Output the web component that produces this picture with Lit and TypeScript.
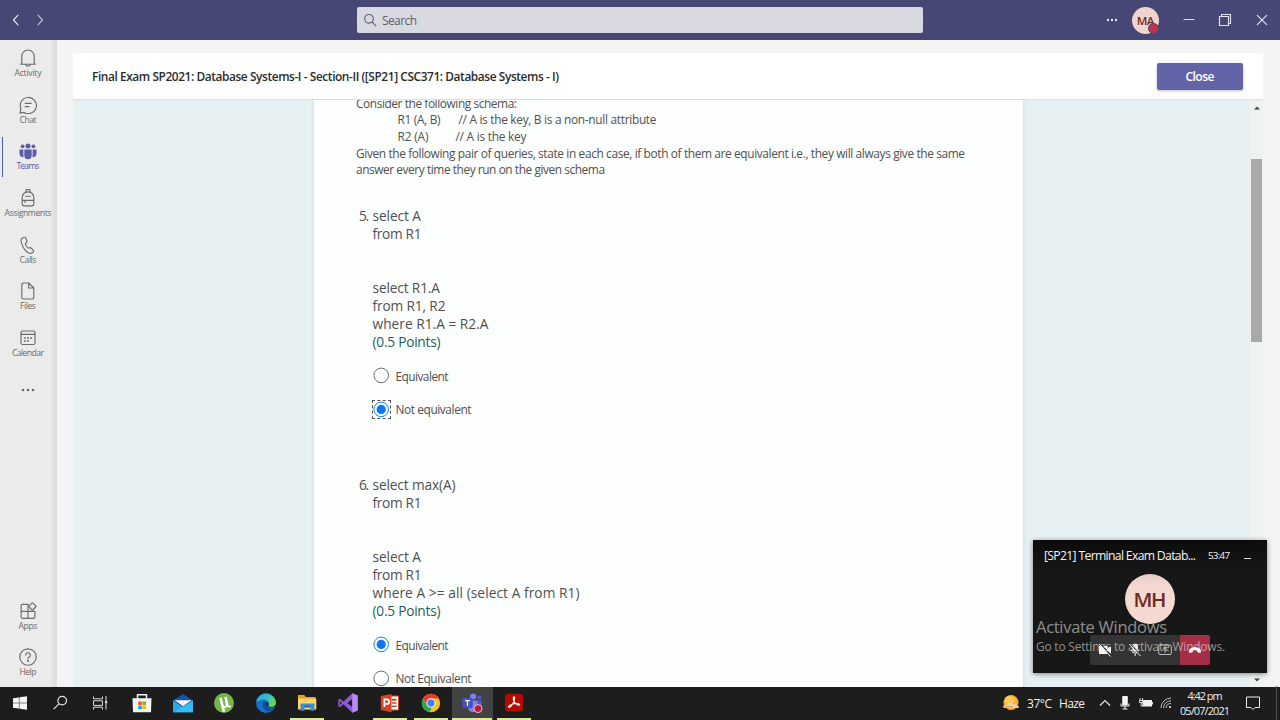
import { LitElement, html, svg, css, nothing } from "lit";
import { customElement, property } from "lit/decorators.js";

/** One line of text, tracked so that it spans the given width. */
@customElement("fit-text")
class FitText extends LitElement {
  @property({ type: Number }) w = 0;
  @property() text = "";
  static styles = css`
    :host { display: block; white-space: pre; }
    span { display: inline-block; white-space: pre; }
  `;
  render() {
    return html`<span>${this.text}</span>`;
  }
  updated() {
    const el = this.renderRoot.querySelector("span") as HTMLElement;
    el.style.letterSpacing = "0px";
    const natural = el.getBoundingClientRect().width;
    const n = this.text.length;
    if (this.w && n > 1) {
      const ls = (this.w - natural) / (n - 1);
      el.style.letterSpacing = `${ls.toFixed(3)}px`;
      el.style.marginRight = `${(-ls).toFixed(3)}px`;
    }
  }
}

const fit = (text: string, w: number, cls = "") =>
  html`<fit-text class=${cls} .w=${w} .text=${text}></fit-text>`;

const icon = (w: number, h: number, body: unknown) =>
  html`<svg width=${w} height=${h} viewBox="0 0 ${w} ${h}" fill="none" stroke="currentColor" stroke-width="1.15" stroke-linecap="round" stroke-linejoin="round">${body}</svg>`;

const railTop = [
  { label: "Activity", w: 27, icon: svg`<path d="M2.8 14V7.200a6.200 6.200 0 0 1 12.400 0V14l1 1.200H1.800zM6.700 15.500a2.400 2.400 0 0 0 4.600 0"/>` },
  { label: "Chat", w: 17, icon: svg`<path d="M1 17.200l.9-4.400A8.100 8.100 0 1 1 5 16.400zM6.200 7.400h6M6.200 10.600h3.900"/>` },
  { label: "Teams", w: 23, on: true, icon: svg`<g fill="currentColor" stroke="none"><circle cx="9" cy="3.900" r="2.500"/><circle cx="3.600" cy="4.300" r="1.900"/><circle cx="14.400" cy="4.300" r="1.900"/><path d="M5.300 7.400h7.400v6.200a3.700 3.700 0 0 1-7.400 0zM.5 7.400h3.900v6.400l.3 1.300A3.500 3.500 0 0 1 .5 12zM17.500 7.400h-3.900v6.400l-.3 1.300a3.500 3.500 0 0 0 4.200-3.100z"/></g>` },
  { label: "Assignments", w: 47, icon: svg`<path d="M3.200 15V8.600a5.800 5.800 0 0 1 11.600 0V15a1.800 1.800 0 0 1-1.800 1.800H5A1.800 1.800 0 0 1 3.200 15zM6.900 3.400V2.200a2.100 2.100 0 0 1 4.200 0v1.200M3.200 11.400h11.600M6 11.400v2M6.700 7.200h4.600"/>` },
  { label: "Calls", w: 17, icon: svg`<path d="M3.200 2.300L4.600 1.500c.9-.5 1.800-.2 2.200.7l1 2.500c.3.800.1 1.400-.5 2l-1 .9c.5 1.800 1.500 3.400 2.900 4.500l1.400-.4c.7-.2 1.400 0 1.900.6l1.700 2.100c.5.7.4 1.500-.2 2-2.800 2.400-7.100-.3-9.400-4.400C2.400 8.100 1.200 3.700 3.200 2.300z"/>` },
  { label: "Files", w: 16, icon: svg`<path d="M4.600 1h5.200l5 5v9.200a1.800 1.800 0 0 1-1.800 1.800H4.600a1.800 1.800 0 0 1-1.800-1.800V2.800A1.800 1.800 0 0 1 4.600 1zM9.600 1.200V6h5"/>` },
  { label: "Calendar", w: 32, icon: svg`<rect x="2" y="2" width="14" height="13.500" rx="1.800"/><path d="M2 5.400h14"/><g fill="currentColor" stroke="none"><circle cx="6" cy="9" r=".95"/><circle cx="9" cy="9" r=".95"/><circle cx="12" cy="9" r=".95"/><circle cx="6" cy="12" r=".95"/><circle cx="9" cy="12" r=".95"/></g>` },
];

const railBottom = [
  { label: "Apps", w: 19, icon: svg`<path d="M9 2.300H3.600A1.500 1.500 0 0 0 2.100 3.800v11a1.500 1.500 0 0 0 1.500 1.500h10.800a1.500 1.500 0 0 0 1.500-1.500V9.300H2.100M9 2.300v14"/><rect x="10.600" y="1.700" width="5.500" height="5.500" rx=".8" transform="rotate(45 13.350 4.450)"/>` },
  { label: "Help", w: 17, icon: svg`<circle cx="9" cy="9" r="8.200"/><path d="M6.700 7a2.300 2.300 0 1 1 3.500 2c-.8.5-1.200.9-1.200 1.900"/><circle cx="9" cy="13" r=".5" fill="currentColor"/>` },
];

const questions = [
  {
    no: "5.",
    lines: [["select A", 48.5], ["from R1", 49], ["", 0], ["", 0], ["select R1.A", 67.5], ["from R1, R2", 73], ["where R1.A = R2.A", 116]],
    options: [{ text: "Equivalent", w: 53 }, { text: "Not equivalent", w: 76, on: true, focus: true }],
  },
  {
    no: "6.",
    lines: [["select max(A)", 83], ["from R1", 49], ["", 0], ["", 0], ["select A", 48.5], ["from R1", 49], ["where A >= all (select A from R1)", 207]],
    options: [{ text: "Equivalent", w: 53, on: true }, { text: "Not Equivalent", w: 76 }],
  },
] as { no: string; lines: [string, number][]; options: { text: string; w: number; on?: boolean; focus?: boolean }[] }[];

const art = (body: unknown) => html`<svg width="22" height="22" viewBox="0 0 22 22">${body}</svg>`;

const taskIcons: { art: unknown; run?: boolean; on?: boolean }[] = [
  { art: art(svg`<path fill="#f6f6f6" d="M4 6.200l5.900-.8v5.300H4zM10.400 5.300L18 4.200v6.500h-7.600zM4 11.200h5.900v5.400L4 15.800zM10.400 11.200H18v6.600l-7.600-1.100z"/>`) },
  { art: art(svg`<g fill="none" stroke="#e4e4e4" stroke-width="1.200"><circle cx="13.200" cy="8.600" r="4.300"/><path d="M10 11.800L4.600 17.200"/></g>`) },
  { art: art(svg`<g fill="none" stroke="#dcdcdc" stroke-width="1"><path d="M3.500 4.500v2.300h9V4.500M3.500 17.500v-2.300h9v2.300M3.500 8.800h9v4.600h-9zM16 4v5M16 12v5.500"/><path d="M15 9h2.200v2.600H15z" fill="#dcdcdc" stroke="none"/></g>`) },
  { art: art(svg`<path d="M6.500 7V2.700h9V7" fill="none" stroke="#f2f2f2" stroke-width="1.500"/><path d="M1.500 6.300h19l-.5 14H2z" fill="#f4f4f4"/><path fill="#f25022" d="M7.300 9.500h3.500v3.500H7.300z"/><path fill="#7fba00" d="M11.400 9.500h3.500v3.500h-3.500z"/><path fill="#00a4ef" d="M7.300 13.600h3.500v3.500H7.300z"/><path fill="#ffb900" d="M11.400 13.600h3.500v3.500h-3.500z"/>`) },
  { art: art(svg`<path d="M1 8.500L11 2l10 6.500v2H1z" fill="#0f58a8"/><path d="M1 8.500L11 14.800 21 8.500V20.300H1z" fill="#28a8ea"/><path d="M21 8.500L1 20.300h20z" fill="#38b9f4"/><path d="M2.500 8.200h17L11 14.200z" fill="#f4f9fd"/>`) },
  { art: art(svg`<circle cx="11" cy="11" r="10" fill="#76b54a"/><path d="M6.200 6.200l2.500-.8 1.900 7.400c.5 2 2.400 1.800 2.200-.3l-1.500-7.200 2.500-.5 1.700 7.600c.4 1.500 1.500 1.600 2.400 1.200l.2 1.500c-1.400.8-3 .7-3.900-.6-.8 1.400-2 1.700-3 1.300l1 3.700-2.500.5z" fill="#fff"/>`) },
  { art: art(svg`<defs><linearGradient id="e1" x1="0" y1="0" x2="1" y2=".4"><stop offset="0" stop-color="#2aa7e8"/><stop offset=".6" stop-color="#35c1c4"/><stop offset="1" stop-color="#62d84e"/></linearGradient></defs><circle cx="11" cy="11" r="10" fill="#1474c4"/><path d="M1.200 10A10 10 0 0 1 21 10.500c0 3.400-3 4.600-5.500 4.400-1.800-.2-2.700-1-2.100-2 1.500-2.600-1-5.800-5-5.400C5 7.800 2.300 9 1.200 10z" fill="url(#e1)"/><path d="M8.200 10c-1.700 3.700.6 8.600 5.600 9.600A10 10 0 0 0 19.500 16c-3 1.600-7.300.6-8.200-2.500-.4-1.600.3-2.600.7-3.300-1-.8-2.700-1-3.800-.2z" fill="#0c4f9c"/><path d="M12 10.200c-1.500 2 0 4.700 3.500 5.300 1.900.3 3.500-.3 4.500-1l1 1.500 1-4-3 2.500c-3.500 1.200-6.500.2-5.600-1.700.4-1 .2-2-1.400-2.600z" fill="#1e1e1e"/>`) },
  { run: true, art: art(svg`<path d="M2 3h6.300l1.500 2h9.700v5H2z" fill="#e9a020"/><path d="M2 6.500h18.300v11H2z" fill="#ffd667"/><path d="M4.500 11.500h14v7.300h-3.900v-3.300H8.400v3.300H4.500z" fill="#3f8fd0"/><path d="M8.400 13.400h6.200v2H8.400z" fill="#2c6fb0"/>`) },
  { art: art(svg`<path d="M15.300 1.300L20.700 3.600v14.800l-5.400 2.300-9-8.500L3 15.200 1.300 14.300V7.700L3 6.800l3.300 3zM15.400 7L10.200 11l5.200 4zM2.900 9v4L5 11z" fill="#8c5ad6" fill-rule="evenodd"/><path d="M15.300 1.300L20.700 3.600v14.800l-5.400 2.300z" fill="#b98cf2"/>`) },
  { run: true, art: art(svg`<path d="M11.500 4h8v14h-8z" fill="#fff" stroke="#d04423"/><path d="M13 6.800h4.500v2H13zM13 10.300h4.500v1.400H13zM13 13.500h4.500v1.400H13z" fill="#d04423"/><path d="M1.800 4l10.800-2v18.200L1.800 18z" fill="#d24625"/><path d="M5.400 15V7.300h2.300a2.300 2.300 0 0 1 0 4.700H5.500" fill="none" stroke="#fff" stroke-width="1.700"/>`) },
  { run: true, art: art(svg`<circle cx="11" cy="11" r="9.200" fill="#fbc116"/><path d="M3 6.400A9.200 9.200 0 0 1 19 6.400H11L7.200 13.200z" fill="#e33b2e"/><path d="M3 6.400l4 6.900A4.600 4.600 0 0 0 12 15.400L9.700 20.100A9.200 9.200 0 0 1 3 6.400z" fill="#2da44e"/><circle cx="11" cy="11" r="4.700" fill="#fff"/><circle cx="11" cy="11" r="3.700" fill="#3f83f0"/>`) },
  { run: true, on: true, art: art(svg`<circle cx="12.200" cy="4.600" r="3" fill="#7b83eb"/><circle cx="18.300" cy="5.600" r="2.100" fill="#5059c9"/><path d="M15 8.500h5.800v5.500a3.500 3.500 0 0 1-5.800 2.600z" fill="#5059c9"/><path d="M7.500 8.500h9v7a4.800 4.800 0 0 1-9 2z" fill="#7b83eb"/><rect x="1.300" y="6" width="10.400" height="10" rx="1" fill="#4650b6"/><path d="M4 8.600h5M6.500 8.600v5.200" stroke="#fff" stroke-width="1.300"/><circle cx="17" cy="16.600" r="4" fill="#c4153a" stroke="#eee" stroke-width=".8"/>`) },
  { run: true, art: art(svg`<rect x="2" y="1.800" width="18" height="17.600" rx="3" fill="#b30b00"/><path d="M5.800 15.200c-1.600-.8 2-3 5.200-3.500 3.400-.6 6.300.2 5.500 1.300-1 1.100-4.800-1.300-5.800-4.300-.6-2-.6-3.700.2-3.800 1-.1.900 2.400 0 4.500-1.100 2.900-3.500 6.500-5.100 5.800z" fill="none" stroke="#fff" stroke-width="1.100"/>`) },
];

@customElement("app-root")
class AppRoot extends LitElement {
  static styles = css`
    :host { display: block; width: 1280px; height: 720px; overflow: hidden; font-family: "Open Sans", "Noto Sans", sans-serif; color: #505050; }
    * { box-sizing: border-box; }
    svg { display: block; flex: none; }
    .page { display: flex; flex-direction: column; width: 1280px; height: 720px; position: relative; }
    .titlebar { height: 40px; flex: none; background: #464775; display: flex; align-items: center; color: #e4e4f0; padding-left: 11px; }
    .nav { display: flex; gap: 14px; width: 346px; }
    .search { width: 566px; height: 26px; background: #d9d9e2; border-radius: 2px; display: flex; align-items: center; gap: 5px; padding-left: 6px; color: #5c5d76; font-size: 12px; }
    .wincontrols { display: flex; align-items: center; padding-left: 183px; }
    .avatar { width: 27px; height: 27px; border-radius: 50%; background: #f1d4cc; color: #6e2a1d; font-size: 11.500px; font-weight: 600; display: flex; align-items: center; justify-content: center; position: relative; margin: 0 24px 0 14px; }
    .busy { position: absolute; right: 0; bottom: 0; width: 11px; height: 11px; border-radius: 50%; background: #c4314b; border: 1px solid #464775; }
    .restore { margin-left: 23px; }
    .exit { margin-left: 24px; }
    .body { flex: 1; min-height: 0; display: flex; background: #f4f4f4; }
    .rail { width: 57px; flex: none; background: linear-gradient(90deg, #ebebeb 0 50px, #dfdfdf 54px 57px); display: flex; flex-direction: column; padding-top: 4px; color: #6c6c6c; }
    .item { height: 46.700px; flex: none; display: flex; flex-direction: column; align-items: center; padding: 5px 0 0; width: 56px; }
    .item .lbl { font-size: 8.700px; line-height: 11px; margin-top: 1px; }
    .item.on { color: #5b5ca8; }
    .itemwrap { display: flex; position: relative; }
    .marker { position: absolute; left: 2px; top: 0; width: 1px; height: 40px; background: #5558af; }
    .more { height: 38px; width: 56px; flex: none; display: flex; justify-content: center; align-items: center; }
    .spacer { flex: 1; }
    .railend { display: flex; flex-direction: column; height: 90px; flex: none; }
    .stage { flex: 1; min-width: 0; margin: 13px 17px 0 16px; display: flex; flex-direction: column; background: #e7f0f3; }
    .head { height: 47px; flex: none; background: #fff; border-bottom: 1px solid #dcdfe0; display: flex; align-items: center; justify-content: space-between; padding: 0 20px 0 19px; }
    .head .title { font-size: 11.900px; font-weight: 600; color: #2c2c2c; }
    .close { width: 86px; height: 27px; border-radius: 2px; background: #6264a7; color: #fff; font-weight: 600; font-size: 12.200px; display: flex; align-items: center; justify-content: center; box-shadow: 0 1px 3px #0004; }
    .scroll { flex: 1; min-height: 0; display: flex; overflow: hidden; }
    .form { width: 709px; height: 620px; flex: none; margin-left: 241px; background: #fdfefe; box-shadow: 0 0 4px #9fb0b566; padding: 0 42px; }
    .intro { height: 78px; display: flex; flex-direction: column; justify-content: flex-end; font-size: 11.900px; line-height: 16.670px; overflow: hidden; }
    .intro > * { flex: none; height: 16.670px; }
    .intro .ind { display: flex; padding-left: 41.500px; }
    .intro .ind fit-text:first-child { width: 61px; }
    .intro .ind.two fit-text:first-child { width: 58px; }
    .q { display: grid; grid-template-columns: 13.500px 1fr; padding-left: 3px; margin-top: 29.400px; height: 269px; align-content: start; }
    .q + .q { margin-top: 0; }
    .no, .lines { font-size: 13.700px; line-height: 18px; }
    .lines > * { height: 18px; }
    .pts { color: #1f5f5b; }
    .opts { grid-column: 2; padding-top: 8px; }
    .opt { height: 33.200px; display: flex; align-items: center; font-size: 11.900px; gap: 6px; }
    .radio { width: 17px; height: 17px; flex: none; display: flex; }
    .focus { outline: 1px dashed #555; outline-offset: -.5px; }
    .bar { width: 13px; margin-left: auto; background: #f0f1f1; display: flex; flex-direction: column; align-items: center; padding: 6px 1px 5px 1px; }
    .thumb { width: 11px; height: 183px; flex: none; background: #a9a9a9; margin-top: 49px; }
    .bar .down { margin-top: auto; }
    .taskbar { height: 33.400px; flex: none; background: #1d1d1d; display: flex; color: #f0f0f0; }
    .tasks { display: flex; }
    .task { width: 41.330px; display: flex; justify-content: center; padding-top: 5.600px; }
    .task.sys { width: 40.300px; }
    .task.run { background: linear-gradient(#dbf08c, #dbf08c) center bottom / 34px 2px no-repeat; }
    .task.on { background: linear-gradient(#dbf08c, #dbf08c) center bottom / 40px 2px no-repeat, #424242; }
    .tray { margin-left: auto; width: 278px; flex: none; display: flex; align-items: center; }
    .temp { font-size: 12px; margin-left: 7px; }
    .chev { margin-left: 14px; }
    .mic, .batt { margin-left: 9px; }
    .wifi { margin-left: 7px; }
    .clock { font-size: 10.900px; line-height: 15px; display: flex; flex-direction: column; align-items: center; width: 52px; margin-left: 7px; }
    .note { margin-left: 15px; }
    .edge { margin-left: auto; margin-right: 3px; }
    .call { position: absolute; left: 1033px; top: 540px; width: 234px; height: 133px; background: #171717; box-shadow: 0 1px 5px #0007; color: #f4f4f4; display: flex; flex-direction: column; align-items: center; }
    .callhead { height: 31px; width: 100%; display: flex; align-items: center; padding-left: 11px; font-size: 12.200px; background: linear-gradient(#0c0c0c, #171717); }
    .callhead .time { font-size: 9.800px; margin: 0 0 0 12px; }
    .dash { width: 7px; height: 1px; background: #ddd; margin: 5px 0 0 14px; }
    .mh { width: 50px; height: 50px; margin-top: 3px; padding-bottom: 1px; border-radius: 50%; background: linear-gradient(#e6cdc6, #f4d9d1 25%); color: #6e2a1d; font-size: 20.500px; font-weight: 600; display: flex; align-items: center; justify-content: center; }
    .controls { display: flex; margin-top: 11px; border-radius: 2px; overflow: hidden; }
    .ctl { width: 30px; height: 30px; background: #343434; display: flex; align-items: center; justify-content: center; }
    .ctl.end { background: #a42e45; }
    .wm { position: absolute; left: 1036px; top: 616px; color: #ffffff85; display: flex; flex-direction: column; }
    .wm1 { font-size: 16.500px; line-height: 22px; }
    .wm2 { font-size: 11.900px; line-height: 17px; }
  `;

  railItem(i: { label: string; w: number; icon: unknown; on?: boolean }) {
    return html`<div class="itemwrap">
      ${i.on ? html`<div class="marker"></div>` : nothing}
      <div class="item ${i.on ? "on" : ""}">${icon(18, 18, i.icon)}${fit(i.label, i.w, "lbl")}</div>
    </div>`;
  }

  radio(on?: boolean, focus?: boolean) {
    return html`<div class="radio ${focus ? "focus" : ""}">
      <svg width="17" height="17" viewBox="0 0 17 17">
        <circle cx="8.200" cy="8.400" r="7.300" fill="#fff" stroke=${on ? "#1a7cf0" : "#6d6d6d"} stroke-width="1"/>
        ${on ? svg`<circle cx="8.200" cy="8.400" r="4.600" fill="#0a78f5"/>` : nothing}
      </svg>
    </div>`;
  }

  render() {
    return html`<div class="page">
      <div class="titlebar">
        <div class="nav">
          ${icon(10, 12, svg`<path d="M7 1.200L2.500 6 7 10.800"/>`)}
          ${icon(10, 12, svg`<path d="M3 1.200L7.500 6 3 10.800" opacity=".75"/>`)}
        </div>
        <div class="search">
          ${icon(14, 14, svg`<circle cx="6" cy="5.800" r="4.300"/><path d="M9.200 9.200l3.600 3.600"/>`)}
          ${fit("Search", 35)}
        </div>
        <div class="wincontrols">
          <svg width="12" height="4" viewBox="0 0 12 4" fill="#e4e4f0"><circle cx="2" cy="2" r="1.200"/><circle cx="6" cy="2" r="1.200"/><circle cx="10" cy="2" r="1.200"/></svg>
          <div class="avatar">${fit("MA", 17.5)}<div class="busy"></div></div>
          ${icon(12, 12, svg`<path d="M1 5.500h10"/>`)}
          <div class="restore">${icon(14, 14, svg`<path d="M1.500 3.500h9v9h-9zM3.500 3V1.500h9v9H11" stroke-linejoin="miter"/>`)}</div>
          <div class="exit">${icon(12, 12, svg`<path d="M1.300 1.300l9.400 9.400M10.700 1.300L1.300 10.700"/>`)}</div>
        </div>
      </div>
      <div class="body">
        <div class="rail">
          ${railTop.map((i) => this.railItem(i))}
          <div class="more"><svg width="14" height="4" viewBox="0 0 14 4" fill="#686868"><circle cx="2" cy="2" r="1.300"/><circle cx="7" cy="2" r="1.300"/><circle cx="12" cy="2" r="1.300"/></svg></div>
          <div class="spacer"></div>
          <div class="railend">${railBottom.map((i) => this.railItem(i))}</div>
        </div>
        <div class="stage">
          <div class="head">
            ${fit("Final Exam SP2021: Database Systems-I - Section-II ([SP21] CSC371: Database Systems - I)", 467, "title")}
            <div class="close">${fit("Close", 29)}</div>
          </div>
          <div class="scroll">
            <div class="form">
              <div class="intro">
                ${fit("Consider the following schema:", 161)}
                <div class="ind">${fit("R1 (A, B)", 43)}${fit("// A is the key, B is a non-null attribute", 198)}</div>
                <div class="ind two">${fit("R2 (A)", 31)}${fit("// A is the key", 71)}</div>
                ${fit("Given the following pair of queries, state in each case, if both of them are equivalent i.e., they will always give the same", 609)}
                ${fit("answer every time they run on the given schema", 249)}
              </div>
              ${questions.map((q) => html`<div class="q">
                <div class="no">${fit(q.no, 10)}</div>
                <div class="lines">
                  ${q.lines.map(([t, w]) => fit(t, w))}
                  ${fit("(0.5 Points)", 68, "pts")}
                </div>
                <div class="opts">
                  ${q.options.map((o) => html`<div class="opt">${this.radio(o.on, o.focus)}${fit(o.text, o.w)}</div>`)}
                </div>
              </div>`)}
            </div>
            <div class="bar">
              <svg width="6" height="4" viewBox="0 0 6 4" fill="#444"><path d="M0 3.500L3 .5l3 3z"/></svg>
              <div class="thumb"></div>
              <svg class="down" width="6" height="4" viewBox="0 0 6 4" fill="#444"><path d="M0 .5l3 3 3-3z"/></svg>
            </div>
          </div>
        </div>
      </div>
      <div class="taskbar">
        <div class="tasks">
          ${taskIcons.map((t, i) => html`<div class="task ${i < 3 ? "sys" : ""} ${t.run ? "run" : ""} ${t.on ? "on" : ""}">${t.art}</div>`)}
        </div>
        <div class="tray">
          <svg width="18" height="18" viewBox="0 0 18 18"><circle cx="9" cy="8.500" r="7.500" fill="#f9b233"/><circle cx="7.500" cy="6.500" r="4.500" fill="#fccb55"/><path d="M1 13a2 2 0 0 1 2-2h2a3.500 3.500 0 0 1 6.500-.5A2.500 2.500 0 0 1 15 12h1.500a1.500 1.500 0 0 1 0 2H2z" fill="#e9d2ae"/><path d="M2 12.800h9" stroke="#b98a4a" stroke-width=".8"/></svg>
          <div class="temp">${fit("37°C", 25)}</div>
          <div class="temp">${fit("Haze", 26)}</div>
          <svg class="chev" width="12" height="8" viewBox="0 0 12 8" fill="none" stroke="#e8e8e8" stroke-width="1.200"><path d="M1 6.500l5-5 5 5"/></svg>
          <svg class="mic" width="10" height="14" viewBox="0 0 10 14"><rect x="2.200" y="0" width="5.600" height="9.500" rx=".8" fill="#f4f4f4"/><path d="M1 7.500V10h8V7.500M5 10v3M2.500 13h5" stroke="#f4f4f4" fill="none"/></svg>
          <svg class="batt" width="14" height="12" viewBox="0 0 14 12"><rect x="4" y="3.500" width="8.500" height="5.500" fill="#f0f0f0" stroke="#f0f0f0"/><path d="M13.500 5v2.500M1 1v2M3.500 1v2M.5 3.500h3.500v2H.5zM2.200 5v4H4" stroke="#f0f0f0" fill="none" stroke-width=".9"/></svg>
          <svg class="wifi" width="12" height="12" viewBox="0 0 12 12" fill="none" stroke="#bdbdbd" stroke-width="1"><path d="M1 11A10 10 0 0 1 11 1M3.500 11A7.500 7.500 0 0 1 11 3.800M6 11a5 5 0 0 1 5-4.500"/><circle cx="10" cy="10" r="1" fill="#fff" stroke="none"/></svg>
          <div class="clock">${fit("4:42 pm", 35)}${fit("05/07/2021", 50)}</div>
          <svg class="note" width="14" height="14" viewBox="0 0 14 14" fill="none" stroke="#ececec" stroke-width="1"><path d="M.5 1h13v10.500H9L7 13.500l-2-2H.5z"/></svg>
          <svg class="edge" width="1" height="34" viewBox="0 0 1 34"><path fill="#555" d="M0 0h1v34H0z"/></svg>
        </div>
      </div>
      <div class="call">
        <div class="callhead">${fit("[SP21] Terminal Exam Datab...", 152)}${fit("53:47", 22, "time")}<div class="dash"></div></div>
        <div class="mh">${fit("MH", 33)}</div>
        <div class="controls">
          <div class="ctl"><svg width="16" height="14" viewBox="0 0 16 14"><path d="M2 3h8.500v2.500L14 3.300v7.400l-3.500-2.200V11H2z" fill="#f4f4f4"/><path d="M3.300 0.800l11.500 12.500" stroke="#343434" stroke-width="1.400"/><path d="M2 1l11.500 12.500" stroke="#f4f4f4"/></svg></div>
          <div class="ctl"><svg width="14" height="14" viewBox="0 0 14 14" fill="none" stroke="#eee"><rect x="5" y="1" width="4.500" height="7.500" rx="2.200" fill="#eee"/><path d="M3.500 6.500a3.700 3.700 0 0 0 7.400 0M7.200 10.500V13"/><path d="M2.800 1.200l10.500 11.500" stroke="#343434" stroke-width="1.400"/><path d="M1.500 1.500L12.500 13"/></svg></div>
          <div class="ctl"><svg width="14" height="12" viewBox="0 0 14 12" fill="none" stroke="#bbb"><rect x=".7" y="1" width="12.600" height="9.500" rx="1.300"/><path d="M7 8.700V3.500M4.800 5.500L7 3.300l2.200 2.200"/></svg></div>
          <div class="ctl end"><svg width="14" height="8" viewBox="0 0 14 8"><path d="M1 5.500C1 2.500 4 1.200 7 1.200s6 1.300 6 4.300c0 1-.5 1.500-1.300 1.300l-1.600-.4c-.7-.2-.9-.6-.9-1.200V4.300a8 8 0 0 0-4.400 0v.9c0 .6-.2 1-.9 1.200l-1.600.4C1.500 7 1 6.500 1 5.500z" fill="#fff"/></svg></div>
        </div>
      </div>
      <div class="wm">${fit("Activate Windows", 131, "wm1")}${fit("Go to Settings to activate Windows.", 189, "wm2")}</div>
    </div>`;
  }
}
